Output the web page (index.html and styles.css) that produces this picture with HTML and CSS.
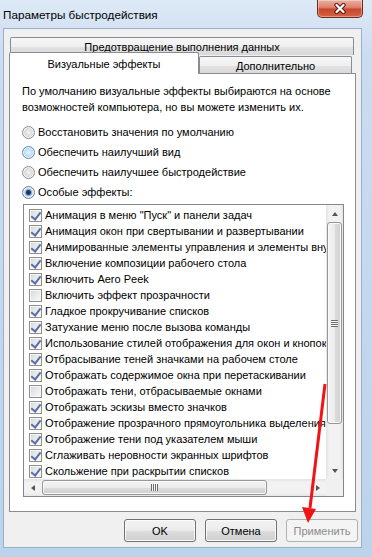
FILE: index.html
```html
<!DOCTYPE html>
<html lang="ru">
<head>
    <meta charset="UTF-8">
    <title>Параметры быстродействия</title>
    <link rel="stylesheet" href="styles.css">
</head>
<body>
<div class="window">
    <div class="titlebar">
        <span class="title">Параметры быстродействия</span>
        <button class="close">
            <svg width="14" height="11" viewBox="0 0 14 11">
                <path d="M3.5 2 L10.5 9 M10.5 2 L3.5 9" stroke="#5a1a12" stroke-width="4.2" stroke-linecap="round"/>
                <path d="M3.5 2 L10.5 9 M10.5 2 L3.5 9" stroke="#fff" stroke-width="2.2" stroke-linecap="round"/>
            </svg>
        </button>
    </div>

    <div class="client">
        <div class="tabs">
            <div class="tab-row upper">
                <div class="tab wide">Предотвращение выполнения данных</div>
            </div>
            <div class="tab-row lower">
                <div class="tab selected">Визуальные эффекты</div>
                <div class="tab other">Дополнительно</div>
            </div>
        </div>

        <div class="panel">
            <p class="intro">По умолчанию визуальные эффекты выбираются на основе<br>возможностей компьютера, но вы можете изменить их.</p>

            <div class="radios">
                <div class="radio"><span class="dot"></span>Восстановить значения по умолчанию</div>
                <div class="radio"><span class="dot hot"></span>Обеспечить наилучший вид</div>
                <div class="radio"><span class="dot"></span>Обеспечить наилучшее быстродействие</div>
                <div class="radio"><span class="dot checked"></span>Особые эффекты:</div>
            </div>

            <div class="listbox">
                <ul class="items">
                    <li><span class="cb on"></span>Анимация в меню "Пуск" и панели задач</li>
                    <li><span class="cb on"></span>Анимация окон при свертывании и развертывании</li>
                    <li><span class="cb on"></span>Анимированные элементы управления и элементы внутри окна</li>
                    <li><span class="cb on"></span>Включение композиции рабочего стола</li>
                    <li><span class="cb on"></span>Включить Aero Peek</li>
                    <li><span class="cb"></span>Включить эффект прозрачности</li>
                    <li><span class="cb on"></span>Гладкое прокручивание списков</li>
                    <li><span class="cb on"></span>Затухание меню после вызова команды</li>
                    <li><span class="cb on"></span>Использование стилей отображения для окон и кнопок</li>
                    <li><span class="cb on"></span>Отбрасывание теней значками на рабочем столе</li>
                    <li><span class="cb on"></span>Отображать содержимое окна при перетаскивании</li>
                    <li><span class="cb"></span>Отображать тени, отбрасываемые окнами</li>
                    <li><span class="cb on"></span>Отображать эскизы вместо значков</li>
                    <li><span class="cb on"></span>Отображение прозрачного прямоугольника выделения</li>
                    <li><span class="cb on"></span>Отображение тени под указателем мыши</li>
                    <li><span class="cb on"></span>Сглаживать неровности экранных шрифтов</li>
                    <li><span class="cb on"></span>Скольжение при раскрытии списков</li>
                </ul>
                <div class="vscroll">
                    <div class="arrow"><span class="tri up"></span></div>
                    <div class="track">
                        <div class="thumb"><span class="grip"></span></div>
                    </div>
                    <div class="arrow"><span class="tri down"></span></div>
                </div>
                <div class="hscroll">
                    <div class="arrow"><span class="tri left"></span></div>
                    <div class="track">
                        <div class="thumb"><span class="grip"></span></div>
                    </div>
                    <div class="arrow"><span class="tri right"></span></div>
                </div>
                <div class="corner"></div>
            </div>
        </div>

        <div class="actions">
            <button class="btn">OK</button>
            <button class="btn">Отмена</button>
            <button class="btn" disabled>Применить</button>
        </div>
    </div>

    <svg class="annotation" width="372" height="557" viewBox="0 0 372 557">
        <line x1="325" y1="384" x2="310" y2="508" stroke="#f01414" stroke-width="3"/>
        <polygon points="302,507 316,509 308,523" fill="#f01414"/>
    </svg>
</div>
</body>
</html>
```

FILE: styles.css
```css
* {
    box-sizing: border-box;
}

body {
    margin: 0;
    font-family: "Liberation Sans", Arial, sans-serif;
    font-size: 11px;
    color: #000;
    background: #bed4ec;
}

.window {
    position: relative;
    width: 372px;
    height: 557px;
    display: flex;
    flex-direction: column;
    padding: 0 10px 9px 3px;
    background: linear-gradient(180deg, #dde9f6 0%, #cbdcf0 10%, #c2d7ee 60%, #bcd3ec 100%);
    overflow: hidden;
}

/* title bar */
.titlebar {
    height: 28px;
    flex-shrink: 0;
    display: flex;
    justify-content: space-between;
    align-items: flex-start;
}

.title {
    font-size: 11.7px;
    line-height: 16px;
    padding-top: 7px;
}

.close {
    width: 46px;
    height: 18px;
    margin-right: -1px;
    padding: 0;
    border: 1px solid #6f2b22;
    border-top: none;
    border-radius: 0 0 5px 5px;
    background: linear-gradient(180deg, #eab0a2 0%, #de8570 42%, #c9472e 55%, #d56243 100%);
    box-shadow: inset 0 0 0 1px rgba(255, 255, 255, 0.35);
    display: flex;
    align-items: center;
    justify-content: center;
}

/* client area */
.client {
    flex: 1;
    display: flex;
    flex-direction: column;
    background: #f0f0f0;
    border: 1px solid #9aafc8;
    padding: 8px 5px 5px 5px;
}

.tabs {
    height: 37px;
    flex-shrink: 0;
    display: flex;
    flex-direction: column;
}

.tab-row {
    display: flex;
    align-items: flex-end;
}

.tab-row.upper {
    height: 18px;
    padding: 0 2px 0 1px;
}

.tab-row.lower {
    height: 19px;
}

.tab {
    height: 18px;
    border: 1px solid #898c95;
    border-bottom: none;
    border-radius: 2px 2px 0 0;
    background: linear-gradient(180deg, #f7f7f7 0%, #efefef 50%, #e3e3e3 51%, #d8d8d8 100%);
    display: flex;
    align-items: center;
    justify-content: center;
    white-space: nowrap;
}

.tab.wide {
    flex: 1;
}

.tab.selected {
    position: relative;
    z-index: 1;
    width: 190px;
    height: 22px;
    background: #fff;
}

.tab.other {
    width: 153px;
}

.panel {
    margin-top: -1px;
    height: 439px;
    flex-shrink: 0;
    display: flex;
    flex-direction: column;
    background: #fff;
    border: 1px solid #898c95;
    padding: 9px 11px 0 12px;
}

.intro {
    margin: 0;
    line-height: 16px;
}

.radios {
    margin-top: 7px;
}

.radio {
    height: 20px;
    display: flex;
    align-items: center;
    gap: 3px;
}

.dot {
    width: 13px;
    height: 13px;
    flex-shrink: 0;
    border-radius: 50%;
    border: 1px solid #8e8f8f;
    background: radial-gradient(circle, #f4f4f4 0, #e6e6e6 2px, #d2d2d2 6px);
    box-shadow: inset 0 0 0 1px #f6f6f6;
}

.dot.hot {
    border-color: #5a8fc0;
    background: radial-gradient(circle, #eef8fe 0, #cfe9f9 2px, #a7d0ef 6px);
}

.dot.checked {
    border-color: #6c7d92;
    background: radial-gradient(circle, #0d2a52 0, #1c4374 2px, #7fa8d6 3px, #c9d9ea 4px, #dedede 6px);
}

/* list of effects */
.listbox {
    margin: 2px 0 0 1px;
    width: 321px;
    height: 293px;
    border: 1px solid #828790;
    background: #fff;
    display: grid;
    grid-template-columns: 1fr 17px;
    grid-template-rows: 1fr 17px;
}

.items {
    margin: 0;
    padding: 2px 0 0 0;
    list-style: none;
    overflow: hidden;
}

.items li {
    height: 16px;
    display: flex;
    align-items: center;
    gap: 3px;
    padding-left: 5px;
    white-space: nowrap;
}

.cb {
    position: relative;
    width: 13px;
    height: 13px;
    flex-shrink: 0;
    border: 1px solid #8e8f8f;
    background: linear-gradient(135deg, #d4d6da 0%, #eeeeee 60%, #fbfbfb 100%);
    box-shadow: inset 0 0 0 1px #f7f7f7;
}

.cb.on::after {
    content: '';
    position: absolute;
    left: 3px;
    top: 0;
    width: 4px;
    height: 8px;
    border: solid #5a6fa8;
    border-width: 0 2px 2px 0;
    transform: rotate(38deg);
}

.vscroll,
.hscroll {
    display: flex;
    background: linear-gradient(90deg, #e4e4e4 0%, #f2f2f2 20%, #f2f2f2 80%, #e6e6e6 100%);
}

.vscroll {
    flex-direction: column;
}

.hscroll {
    background: linear-gradient(180deg, #e4e4e4 0%, #f2f2f2 20%, #f2f2f2 80%, #e6e6e6 100%);
}

.arrow {
    width: 17px;
    height: 17px;
    flex-shrink: 0;
    display: flex;
    align-items: center;
    justify-content: center;
}

.tri {
    width: 0;
    height: 0;
    border: 3px solid transparent;
}

.tri.up {
    border-top: none;
    border-bottom: 4px solid #555;
}

.tri.down {
    border-bottom: none;
    border-top: 4px solid #555;
}

.tri.left {
    border-left: none;
    border-right: 4px solid #555;
}

.tri.right {
    border-right: none;
    border-left: 4px solid #555;
}

.track {
    flex: 1;
    display: flex;
}

.vscroll .track {
    flex-direction: column;
    padding: 0 1px;
}

.hscroll .track {
    padding: 1px 0 1px 1px;
}

.thumb {
    border: 1px solid #979797;
    border-radius: 3px;
    box-shadow: inset 0 0 0 1px #fafafa;
    display: flex;
    align-items: center;
    justify-content: center;
}

.vscroll .thumb {
    height: 202px;
    background: linear-gradient(90deg, #f5f5f5 0%, #ebebeb 50%, #dcdcdc 51%, #d0d0d0 100%);
}

.hscroll .thumb {
    width: 225px;
    background: linear-gradient(180deg, #f5f5f5 0%, #ebebeb 50%, #dcdcdc 51%, #d0d0d0 100%);
}

.grip {
    width: 7px;
    height: 7px;
}

.vscroll .grip {
    background: repeating-linear-gradient(180deg, #6e6e6e 0 1px, #f6f6f6 1px 2px);
}

.hscroll .grip {
    background: repeating-linear-gradient(90deg, #6e6e6e 0 1px, #f6f6f6 1px 2px);
}

.corner {
    background: #f0f0f0;
}

/* dialog buttons */
.actions {
    display: flex;
    justify-content: flex-end;
    gap: 9px;
    margin: 7px -2px 0 0;
}

.btn {
    width: 72px;
    height: 23px;
    padding: 0;
    font-family: inherit;
    font-size: 11px;
    color: #000;
    border: 1px solid #707070;
    border-radius: 3px;
    background: linear-gradient(180deg, #f2f2f2 0%, #ebebeb 50%, #dddddd 51%, #cfcfcf 100%);
    box-shadow: inset 0 0 0 1px #fbfbfb;
}

.btn:disabled {
    color: #8b8b8b;
    border-color: #adb2b5;
    background: #f4f4f4;
    box-shadow: none;
}

/* red arrow drawn over the screenshot */
.annotation {
    position: absolute;
    left: 0;
    top: 0;
    pointer-events: none;
}
```
